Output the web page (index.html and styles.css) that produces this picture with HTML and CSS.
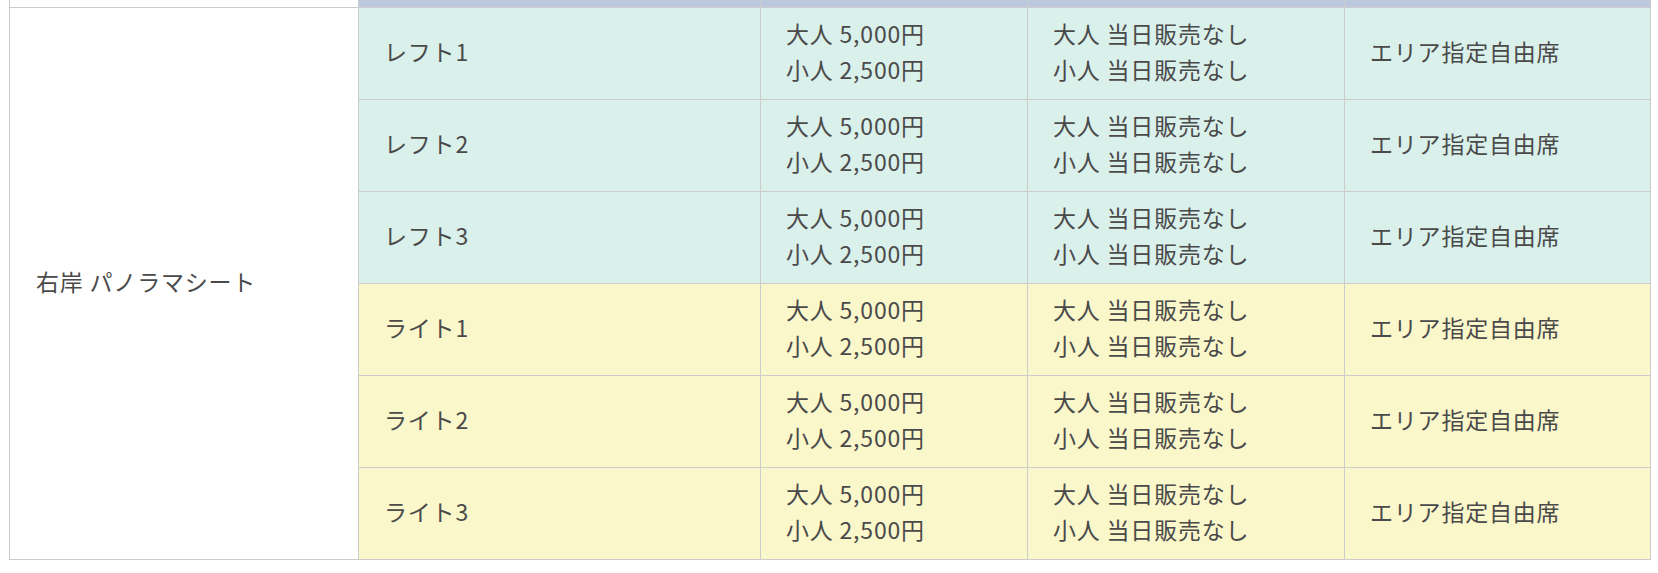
FILE: index.html
```html
<!DOCTYPE html>
<html lang="ja">
<head>
  <meta charset="UTF-8" />
  <meta name="viewport" content="width=device-width, initial-scale=1.0"/>
  <title>座席・料金</title>
  <link rel="stylesheet" href="styles.css">
</head>
<body>
  <div class="wrap">
    <table class="seat-table">
      <colgroup>
        <col class="c-area">
        <col class="c-block">
        <col class="c-price">
        <col class="c-door">
        <col class="c-type">
      </colgroup>
      <!-- 前のグループの末尾 -->
      <tr class="row-tail">
        <td class="cell-area"></td>
        <td></td><td></td><td></td><td></td>
      </tr>
      <tr class="row-left">
        <td class="cell-area" rowspan="6">右岸 パノラマシート</td>
        <td>レフト1</td>
        <td>大人 5,000円<br>小人 2,500円</td>
        <td>大人 当日販売なし<br>小人 当日販売なし</td>
        <td>エリア指定自由席</td>
      </tr>
      <tr class="row-left">
        <td>レフト2</td>
        <td>大人 5,000円<br>小人 2,500円</td>
        <td>大人 当日販売なし<br>小人 当日販売なし</td>
        <td>エリア指定自由席</td>
      </tr>
      <tr class="row-left">
        <td>レフト3</td>
        <td>大人 5,000円<br>小人 2,500円</td>
        <td>大人 当日販売なし<br>小人 当日販売なし</td>
        <td>エリア指定自由席</td>
      </tr>
      <tr class="row-right">
        <td>ライト1</td>
        <td>大人 5,000円<br>小人 2,500円</td>
        <td>大人 当日販売なし<br>小人 当日販売なし</td>
        <td>エリア指定自由席</td>
      </tr>
      <tr class="row-right">
        <td>ライト2</td>
        <td>大人 5,000円<br>小人 2,500円</td>
        <td>大人 当日販売なし<br>小人 当日販売なし</td>
        <td>エリア指定自由席</td>
      </tr>
      <tr class="row-right">
        <td>ライト3</td>
        <td>大人 5,000円<br>小人 2,500円</td>
        <td>大人 当日販売なし<br>小人 当日販売なし</td>
        <td>エリア指定自由席</td>
      </tr>
    </table>
  </div>
</body>
</html>
```

FILE: styles.css
```css
:root {
  --line: #cccccc;
  --text: #4a4a4a;
  --mint: #daf0eb;
  --lemon: #faf7cb;
  --head: #bcc8de;
}

body {
  margin: 0;
  background-color: #fff;
  font-family: "Noto Sans CJK JP", "Noto Sans", sans-serif;
  color: var(--text);
}

.wrap {
  padding-left: 9px;
}

.seat-table {
  width: 1641px;
  table-layout: fixed;
  border-collapse: collapse;
  font-size: 23px;
  line-height: 36px;
  letter-spacing: 0.8px;
}

.c-area { width: 349px; }
.c-block { width: 402px; }
.c-price { width: 267px; }
.c-door { width: 317px; }
.c-type { width: 306px; }

.seat-table td {
  border: 1px solid var(--line);
  padding: 0 25px 6px;
  height: 85px;
  vertical-align: middle;
  white-space: nowrap;
}

.row-tail td {
  height: 7px;
  padding: 0;
  border-top: none;
  background-color: var(--head);
}

.seat-table td.cell-area {
  background-color: #fff;
  padding-left: 26px;
}

.row-left td {
  background-color: var(--mint);
}

.row-right td {
  background-color: var(--lemon);
}
```
